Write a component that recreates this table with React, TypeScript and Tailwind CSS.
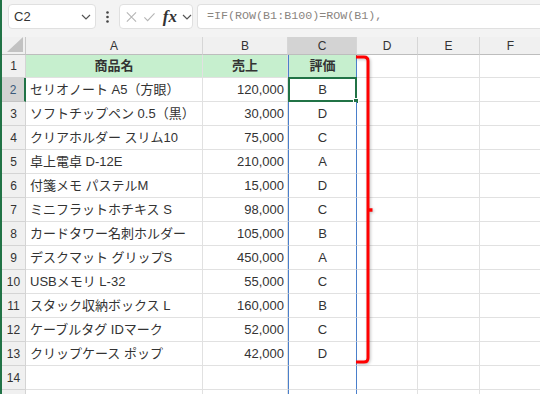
import React from "react";

const rows: [string, string, string][] = [
  ["セリオノート A5（方眼）", "120,000", "B"],
  ["ソフトチップペン 0.5（黒）", "30,000", "D"],
  ["クリアホルダー スリム10", "75,000", "C"],
  ["卓上電卓 D-12E", "210,000", "A"],
  ["付箋メモ パステルM", "15,000", "D"],
  ["ミニフラットホチキス S", "98,000", "C"],
  ["カードタワー名刺ホルダー", "105,000", "B"],
  ["デスクマット グリップS", "450,000", "A"],
  ["USBメモリ L-32", "55,000", "C"],
  ["スタック収納ボックス L", "160,000", "B"],
  ["ケーブルタグ IDマーク", "52,000", "C"],
  ["クリップケース ポップ", "42,000", "D"],
];

const Chevron = () => (
  <svg width="10" height="6" viewBox="0 0 10 6" className="shrink-0">
    <path d="M1 1 L5 5 L9 1" fill="none" stroke="#555" strokeWidth="1.2" />
  </svg>
);

const font = "font-['Liberation_Sans','Noto_Sans_CJK_JP',sans-serif]";

export default function App() {
  const cell = "border-r border-b border-[#e1e1e1] bg-white flex items-center text-[13px] text-[#333] overflow-hidden whitespace-nowrap";
  const rowHead = "border-r border-b border-[#d4d4d4] bg-[#f0f0f0] flex items-center justify-center text-[12px] text-[#333]";
  const cCell = "border-l border-r border-b border-l-[#4a7fcb] border-r-[#4a7fcb] border-b-[#e1e1e1] bg-white flex items-center justify-center text-[13px] text-[#333]";
  return (
    <div className={`relative w-[540px] h-[394px] overflow-hidden bg-[#f3f3f3] border-l-2 border-[#217346] ${font}`}>
      {/* formula bar */}
      <div className="flex items-start h-[37px] pt-[4px] pl-[6px] gap-[4px]">
        <div className="w-[88px] h-[25px] bg-white border border-[#e0e0e0] rounded-[4px] flex items-center justify-between pl-[5px] pr-[4px] text-[13px] text-[#333]">
          <span>C2</span>
          <Chevron />
        </div>
        <div className="w-[15px] h-[25px] flex items-center justify-center">
          <svg width="3" height="12" viewBox="0 0 3 12">
            <circle cx="1.5" cy="1.5" r="1.3" fill="#444" />
            <circle cx="1.5" cy="6" r="1.3" fill="#444" />
            <circle cx="1.5" cy="10.5" r="1.3" fill="#444" />
          </svg>
        </div>
        <div className="w-[74px] h-[25px] bg-white border border-[#e0e0e0] rounded-[4px] flex items-center pl-[5px] gap-[5px]">
          <svg width="14" height="14" viewBox="0 0 14 14">
            <path d="M2 2 L12 12 M12 2 L2 12" stroke="#b5b5b5" strokeWidth="1.2" />
          </svg>
          <svg width="14" height="14" viewBox="0 0 14 14">
            <path d="M1.5 7.5 L5 11 L12.5 3" fill="none" stroke="#b5b5b5" strokeWidth="1.2" />
          </svg>
          <span className="font-['Liberation_Serif',serif] italic font-bold text-[17px] text-[#333] leading-none ml-[2px]">fx</span>
          <Chevron />
        </div>
        <div className="flex-1 h-[25px] bg-white border border-[#e0e0e0] border-r-0 rounded-l-[4px] flex items-center pl-[9px] font-['Liberation_Mono',monospace] text-[11.7px] text-[#8a857f] whitespace-nowrap">
          =IF(ROW(B1:B100)=ROW(B1),
        </div>
      </div>

      {/* grid */}
      <div className="grid grid-cols-[24px_177px_85px_69px_61px_62px_62px] grid-rows-[18px_23px_repeat(14,24px)]">
        {/* header row */}
        <div className="border-r border-b border-[#c8c8c8] border-b-[#bdbdbd] bg-[#f0f0f0] relative">
          <svg className="absolute right-[2px] bottom-[2px]" width="16" height="15" viewBox="0 0 16 15">
            <polygon points="16,0 16,15 0,15" fill="#c2c2c2" />
          </svg>
        </div>
        {["A", "B", "C", "D", "E", "F"].map((c) => (
          <div
            key={c}
            className={`border-r border-b border-r-[#d6d6d6] border-b-[#bdbdbd] flex items-center justify-center text-[12px] text-[#333] ${
              c === "C" ? "bg-[#d3d3d3]" : "bg-[#f0f0f0]"
            }`}
          >
            {c}
          </div>
        ))}

        {/* row 1 */}
        <div className={rowHead}>1</div>
        <div className={`${cell} !bg-[#c6efce] justify-center font-bold`}>商品名</div>
        <div className={`${cell} !bg-[#c6efce] justify-center font-bold`}>売上</div>
        <div className={`${cCell} !bg-[#c6efce] font-bold`}>評価</div>
        <div className={cell}></div>
        <div className={cell}></div>
        <div className={cell}></div>

        {rows.map(([name, amt, grade], i) => {
          const n = i + 2;
          const sel = n === 2;
          return (
            <React.Fragment key={n}>
              <div
                className={
                  sel
                    ? "border-r-2 border-b border-r-[#217346] border-b-[#c4c4c4] bg-[#d3d3d3] flex items-center justify-center text-[12px] text-[#3a5a7a]"
                    : rowHead
                }
              >
                {n}
              </div>
              <div className={`${cell} pl-[4px]`}>{name}</div>
              <div className={`${cell} justify-end pr-[3px]`}>{amt}</div>
              <div className={`${cCell} relative overflow-visible`}>
                {grade}
                {sel && (
                  <>
                    <div className="absolute left-[-1px] top-[-1px] right-[-1px] bottom-[-1px] border-2 border-[#217346]"></div>
                    <div className="absolute right-[-3px] bottom-[-3px] w-[6px] h-[6px] bg-[#217346] border border-white"></div>
                  </>
                )}
              </div>
              <div className={cell}></div>
              <div className={cell}></div>
              <div className={cell}></div>
            </React.Fragment>
          );
        })}

        {[14, 15].map((n) => (
          <React.Fragment key={n}>
            <div className={rowHead}>{n === 14 ? "14" : ""}</div>
            <div className={cell}></div>
            <div className={cell}></div>
            <div className={cCell}></div>
            <div className={cell}></div>
            <div className={cell}></div>
            <div className={cell}></div>
          </React.Fragment>
        ))}
      </div>

      {/* red bracket annotation */}
      <svg
        className="absolute left-[-2px] top-0 pointer-events-none"
        width="540"
        height="394"
        viewBox="0 0 540 394"
        style={{ filter: "drop-shadow(1px 1px 1.5px rgba(0,0,0,0.25))" }}
      >
        <path
          d="M356 57 L364 57 Q368 57 368 61 L368 358 Q368 362 364 362 L356 362"
          fill="none"
          stroke="#ff0000"
          strokeWidth="3"
        />
        <path d="M368 210 L372.5 210" stroke="#ff0000" strokeWidth="3.5" />
      </svg>
    </div>
  );
}
